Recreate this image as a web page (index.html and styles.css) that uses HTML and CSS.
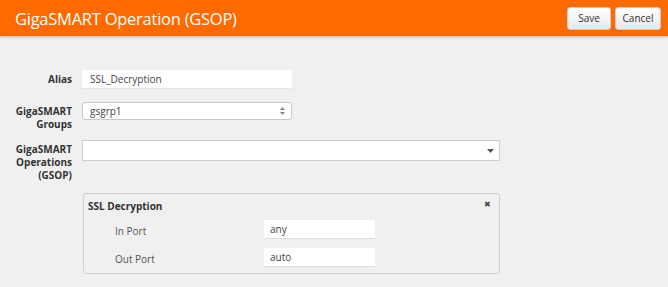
FILE: index.html
```html
<!DOCTYPE html>
<html lang="en">
  <head>
    <meta charset="UTF-8" />
    <meta name="viewport" content="width=device-width, initial-scale=1.0" />
    <title>GigaSMART Operation (GSOP)</title>
    <link rel="stylesheet" href="styles.css">
  </head>
  <body>
    <div class="header">
      <h1 class="title">GigaSMART Operation (GSOP)</h1>
      <div class="actions">
        <button class="btn btn-save">Save</button>
        <button class="btn btn-cancel">Cancel</button>
      </div>
    </div>

    <div class="form">
      <div class="row row-alias">
        <label class="label">Alias</label>
        <div class="text-input short">SSL_Decryption</div>
      </div>
      <div class="row row-groups">
        <label class="label">GigaSMART<br />Groups</label>
        <div class="select short">
          <span>gsgrp1</span>
          <svg class="spinner" width="5" height="8" viewBox="0 0 5 8">
            <path d="M0 3 L2.5 0 L5 3 Z M0 5 L2.5 8 L5 5 Z" fill="#888" />
          </svg>
        </div>
      </div>
      <div class="row row-gsop">
        <label class="label">GigaSMART<br />Operations<br />(GSOP)</label>
        <div class="select wide">
          <span></span>
          <svg class="caret" width="7" height="4" viewBox="0 0 7 4">
            <path d="M0 0 L7 0 L3.5 4 Z" fill="#555" />
          </svg>
        </div>
      </div>

      <div class="panel">
        <div class="panel-head">
          <span class="panel-title">SSL Decryption</span>
          <span class="close">&#x2716;</span>
        </div>
        <div class="panel-row">
          <span class="panel-label">In Port</span>
          <div class="port-input">any</div>
        </div>
        <div class="panel-row">
          <span class="panel-label">Out Port</span>
          <div class="port-input">auto</div>
        </div>
      </div>
    </div>
  </body>
</html>
```

FILE: styles.css
```css
body {
  font-family: "Open Sans", "Noto Sans", sans-serif;
  margin: 0;
  background-color: #f0f0f0;
  color: #333;
}
.header {
  height: 36px;
  background: #ff6a00;
  display: flex;
  align-items: center;
  justify-content: space-between;
  padding: 0 7px 0 15px;
  box-shadow: 0 1px 0 #e5c9b5, 0 2px 2px rgba(0, 0, 0, 0.12);
}
.title {
  margin: 0;
  font-size: 16.5px;
  font-weight: normal;
  color: #fff;
  letter-spacing: -0.25px;
}
.actions {
  display: flex;
  gap: 4px;
  margin-top: 0;
}
.btn {
  font-family: inherit;
  font-size: 10px;
  color: #333;
  height: 23px;
  padding: 0;
  background: linear-gradient(#ffffff, #e8e8e8);
  border: 1px solid #ccc;
  border-radius: 3px;
}
.btn-save {
  width: 44px;
}
.btn-cancel {
  width: 46px;
}
.form {
  padding-top: 34px;
}
.row {
  display: grid;
  grid-template-columns: 72px auto;
  column-gap: 10px;
  align-items: start;
  font-size: 10px;
}
.label {
  text-align: right;
  font-weight: bold;
  color: #333;
  line-height: 12.5px;
}
.row-alias {
  margin-bottom: 12px;
}
.row-alias .label {
  line-height: 19px;
}
.row-groups {
  margin-bottom: 10px;
}
.row-groups .label {
  padding-top: 4px;
}
.row-gsop {
  margin-bottom: 11px;
}
.row-gsop .label {
  padding-top: 3px;
  line-height: 13px;
}
.text-input {
  height: 19px;
  line-height: 19px;
  background: #fff;
  padding-left: 8px;
  color: #444;
  border-bottom: 1px solid #e6e6e6;
  box-sizing: border-box;
}
.short {
  width: 210px;
}
.wide {
  width: 418px;
}
.select {
  display: flex;
  align-items: center;
  justify-content: space-between;
  background: #fff;
  border: 1px solid #c8c8c8;
  box-sizing: border-box;
  padding: 0 6px 0 7px;
  color: #444;
}
.row-groups .select {
  height: 18px;
  border-radius: 3px;
  margin-top: 1px;
}
.row-gsop .select {
  height: 21px;
  border-color: #cfcfcf;
  padding-right: 5px;
}
.panel {
  margin-left: 83px;
  width: 417px;
  height: 81px;
  box-sizing: border-box;
  border: 1px solid #cfcfcf;
  border-radius: 3px;
  padding: 0 8px 0 4px;
  font-size: 10px;
}
.panel-head {
  display: flex;
  justify-content: space-between;
  align-items: center;
  height: 23px;
  margin-bottom: 3px;
}
.panel-title {
  font-weight: bold;
  color: #333;
}
.close {
  font-size: 8px;
  color: #444;
  margin-top: -4px;
}
.panel-row {
  display: grid;
  grid-template-columns: 149px 111px;
  align-items: center;
  padding-left: 27px;
  margin-bottom: 9px;
  color: #555;
}
.panel-label {
  padding-top: 2px;
}
.port-input {
  height: 19px;
  line-height: 18px;
  background: #fff;
  padding-left: 6px;
  color: #444;
  border-bottom: 1px solid #ddd;
  box-sizing: border-box;
}
```
